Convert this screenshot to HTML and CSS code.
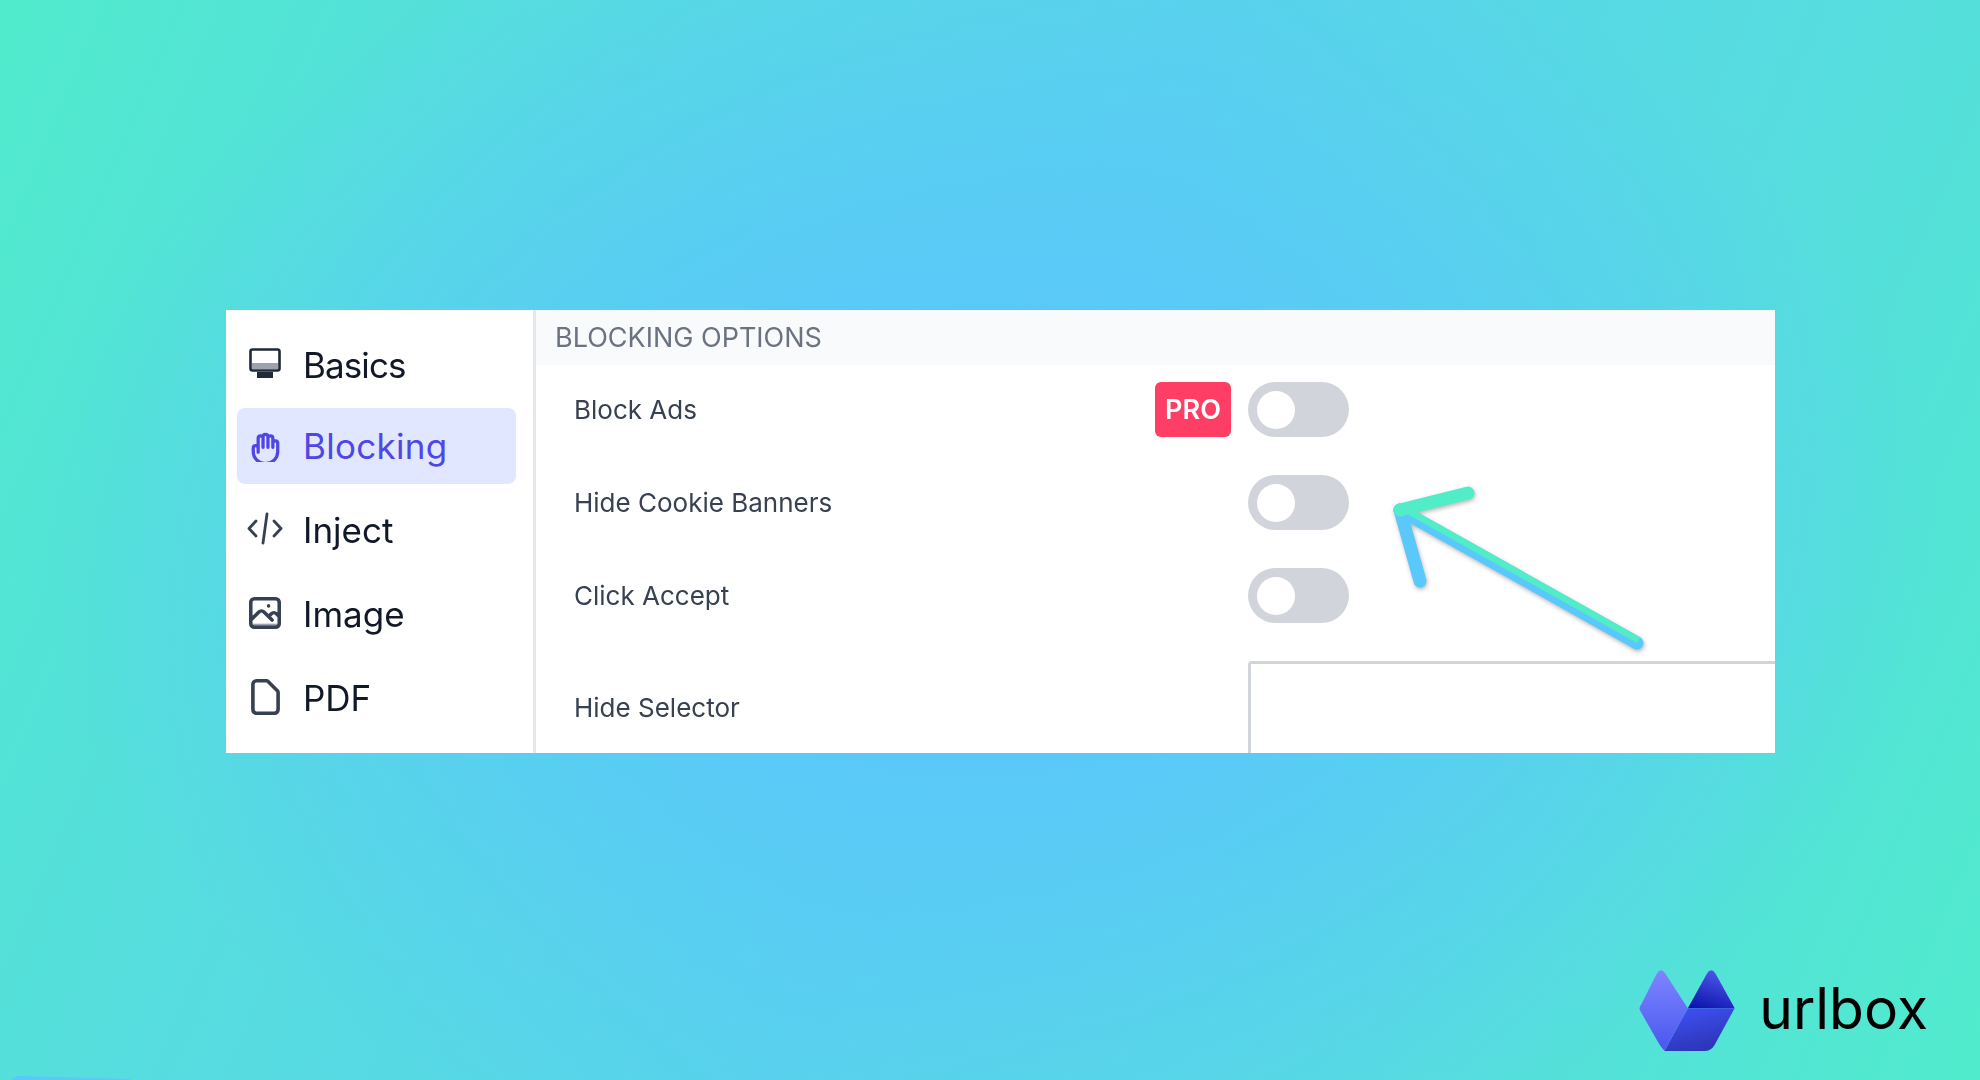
FILE: index.html
```html
<!DOCTYPE html>
<html>

<head>
  <meta charset="utf8">
  <title>Blocking options</title>
  <link rel="stylesheet" href="styles.css">
</head>

<body>
  <section class="panel">
    <nav class="sidebar">
      <a class="nav-item">
        <span class="nav-icon">
          <svg width="32" height="32" viewBox="0 0 32 32">
            <rect x="1.5" y="1.5" width="29" height="21" rx="2" fill="#fff" stroke="#1f2937" stroke-width="2.6" />
            <rect x="3" y="15" width="26" height="6" fill="#9ca3af" />
            <path d="M8 24h16v6H8z" fill="#1f2937" />
          </svg>
        </span>
        Basics
      </a>
      <a class="nav-item active">
        <span class="nav-icon">
          <svg class="line-icon hand" width="31" height="31" viewBox="2 1 19 19">
            <path d="M7 11.5V14m0-2.5v-6a1.5 1.5 0 113 0m-3 6a1.5 1.5 0 00-3 0v2a7.5 7.5 0 0015 0v-5a1.5 1.5 0 00-3 0m-6-3V11m0-5.5v-1a1.5 1.5 0 013 0v1m0 0V11m0-5.5a1.5 1.5 0 013 0v3m0 0V11" />
          </svg>
        </span>
        Blocking
      </a>
      <a class="nav-item">
        <span class="nav-icon">
          <svg class="line-icon thin" width="40" height="38" viewBox="0 0 40 38">
            <path d="M11 11L4 18.5L11 26M22 4L18 33M29 11L36 18.5L29 26" />
          </svg>
        </span>
        Inject
      </a>
      <a class="nav-item">
        <span class="nav-icon">
          <svg class="line-icon" width="32" height="32" viewBox="3 3 18 18">
            <path d="M5 18h14v2H5z" fill="#9ca3af" stroke="none" />
            <path d="M4 16l4.586-4.586a2 2 0 012.828 0L16 16m-2-2l1.586-1.586a2 2 0 012.828 0L20 14m-6-6h.01M6 20h12a2 2 0 002-2V6a2 2 0 00-2-2H6a2 2 0 00-2 2v12a2 2 0 002 2z" />
          </svg>
        </span>
        Image
      </a>
      <a class="nav-item">
        <span class="nav-icon">
          <svg class="line-icon" width="29" height="36" viewBox="4 2 16 20">
            <path d="M7 21h10a2 2 0 002-2V9.414a1 1 0 00-.293-.707l-5.414-5.414A1 1 0 0012.586 3H7a2 2 0 00-2 2v14a2 2 0 002 2z" />
          </svg>
        </span>
        PDF
      </a>
    </nav>

    <main class="options">
      <h2 class="options-title">Blocking Options</h2>
      <div class="option-row">
        <span class="option-label">Block Ads</span>
        <span class="pro-badge">PRO</span>
        <span class="toggle"><i></i></span>
      </div>
      <div class="option-row">
        <span class="option-label">Hide Cookie Banners</span>
        <span class="toggle"><i></i></span>
      </div>
      <div class="option-row">
        <span class="option-label">Click Accept</span>
        <span class="toggle"><i></i></span>
      </div>
      <div class="option-row selector-row">
        <span class="option-label">Hide Selector</span>
        <div class="selector-box"></div>
      </div>
    </main>

    <svg class="arrow" width="270" height="180" viewBox="0 0 270 180">
      <defs>
        <clipPath id="upper-half">
          <path d="M20 30L257 163L300 90L64 -40z" />
        </clipPath>
      </defs>
      <path d="M20 30L257 163" stroke="#5bc8fb" />
      <path d="M20 30L257 163" stroke="#50edc8" clip-path="url(#upper-half)" />
      <path d="M20 30L40 101" stroke="#5bc8fb" />
      <path d="M20 30L88 13" stroke="#50edc8" />
    </svg>
  </section>

  <footer class="brand">
    <svg width="102" height="87" viewBox="50 55 305 260">
      <defs>
        <linearGradient id="logo-left" x1="0" y1="0" x2="0" y2="1">
          <stop offset="0" stop-color="#7d86ff" />
          <stop offset="1" stop-color="#4a56ee" />
        </linearGradient>
        <linearGradient id="logo-top" x1="0" y1="1" x2="0.4" y2="0">
          <stop offset="0" stop-color="#070fa8" />
          <stop offset="1" stop-color="#4a53e6" />
        </linearGradient>
        <linearGradient id="logo-bottom" x1="0.3" y1="0" x2="0.7" y2="1">
          <stop offset="0" stop-color="#3f50f2" />
          <stop offset="1" stop-color="#2a33b2" />
        </linearGradient>
      </defs>
      <path d="M66 166L112 75Q125 55 138 75L205 178L135 305Q125 296 118 283L66 192Q55 178 66 166z" fill="url(#logo-left)" />
      <path d="M205 178L262 75Q275 55 288 75L345 178z" fill="url(#logo-top)" />
      <path d="M205 178H345L285 288Q274 306 255 306H135z" fill="url(#logo-bottom)" />
    </svg>
    <span class="brand-name">urlbox</span>
  </footer>
</body>

</html>
```

FILE: styles.css
```css
html,
body {
  margin: 0;
  height: 100%;
}

body {
  position: relative;
  box-sizing: border-box;
  height: 1080px;
  padding-top: 310px;
  display: flex;
  flex-direction: column;
  overflow: hidden;
  font-family: Inter, sans-serif;
  background:
    radial-gradient(ellipse 48% 62% at 50% 50%, #5ac8fa 30%, rgba(90, 200, 250, 0) 100%),
    linear-gradient(113deg, #50ebcd 0%, #56dcdf 25%, #58d4ea 50%, #56dcdf 75%, #50ebcd 100%);
}

/* little sliver of blue in the bottom left corner */
body::after {
  content: "";
  position: absolute;
  left: 0;
  bottom: 0;
  width: 130px;
  height: 5px;
  background: #5ac8fa;
  clip-path: polygon(8% 100%, 13% 20%, 100% 80%, 100% 100%);
}

.panel {
  position: relative;
  display: flex;
  width: 1549px;
  height: 443px;
  margin-left: 226px;
  background: #fff;
  overflow: hidden;
}

.sidebar {
  box-sizing: border-box;
  width: 310px;
  padding: 20px 17px 0 11px;
  border-right: 3px solid #e5e7eb;
  display: flex;
  flex-direction: column;
  gap: 8px;
  flex: none;
}

.nav-item {
  display: flex;
  align-items: center;
  height: 76px;
  flex: none;
  padding-left: 8px;
  border-radius: 8px;
  color: #111827;
  font-size: 35px;
  filter: blur(0.6px);
}

.nav-item:first-child {
  height: 70px;
  letter-spacing: -0.9px;
}

.nav-item.active {
  background: #e0e7ff;
  color: #4f46e5;
  letter-spacing: 0.3px;
  filter: none;
}

.nav-icon {
  display: flex;
  align-items: center;
  justify-content: center;
  width: 40px;
  margin-right: 18px;
  margin-bottom: 3px;
}

.active .nav-icon {
  margin-bottom: 0;
  filter: blur(0.6px);
}

.line-icon {
  fill: none;
  stroke: #374151;
  stroke-width: 2;
  stroke-linecap: round;
  stroke-linejoin: round;
}

.line-icon.thin {
  stroke-width: 2.8;
}

.line-icon.hand {
  stroke-width: 2;
}

.active .line-icon {
  stroke: #4f46e5;
}

.options {
  flex: 1;
  min-width: 0;
}

.options-title {
  height: 55px;
  margin: 0;
  padding-left: 19px;
  background: #f9fafb;
  color: #6b7280;
  font-size: 27px;
  font-weight: 400;
  line-height: 55px;
  text-transform: uppercase;
  filter: blur(0.6px);
}

.option-row {
  display: flex;
  align-items: center;
  height: 55px;
  margin-top: 17px;
  margin-bottom: 38px;
  padding-left: 38px;
}

.option-label {
  flex: 1;
  margin-bottom: 1px;
  color: #374151;
  font-size: 26px;
  filter: blur(0.6px);
}

.pro-badge {
  width: 76px;
  height: 55px;
  margin-right: 17px;
  border-radius: 6px;
  background: #ff3e66;
  color: #fff;
  font-size: 27px;
  font-weight: 600;
  line-height: 55px;
  text-align: center;
  filter: blur(0.4px);
}

.toggle {
  display: flex;
  align-items: center;
  box-sizing: border-box;
  width: 101px;
  height: 55px;
  margin-right: 426px;
  padding-left: 9px;
  border-radius: 28px;
  background: #d1d5db;
  filter: blur(0.5px);
}

.toggle i {
  width: 38px;
  height: 38px;
  border-radius: 50%;
  background: #fff;
}

.selector-row {
  align-items: flex-start;
  margin: 0;
}

.selector-row .option-label {
  padding-top: 31px;
}

.selector-box {
  box-sizing: border-box;
  width: 601px;
  height: 150px;
  margin-right: -74px;
  border: 3px solid #d1d5db;
  border-radius: 4px;
  background: #fff;
}

.arrow {
  position: absolute;
  left: 1154px;
  top: 170px;
  overflow: visible;
  fill: none;
  stroke-width: 13;
  stroke-linecap: round;
  filter: drop-shadow(1px 2px 2px rgba(0, 0, 0, 0.28));
}

.brand {
  display: flex;
  align-items: center;
  align-self: flex-end;
  gap: 21px;
  margin-top: auto;
  margin-right: 52px;
  margin-bottom: 26px;
}

.brand-name {
  margin-bottom: 4px;
  color: #000;
  font-size: 57px;
  line-height: 66px;
  filter: blur(0.4px);
}
```
